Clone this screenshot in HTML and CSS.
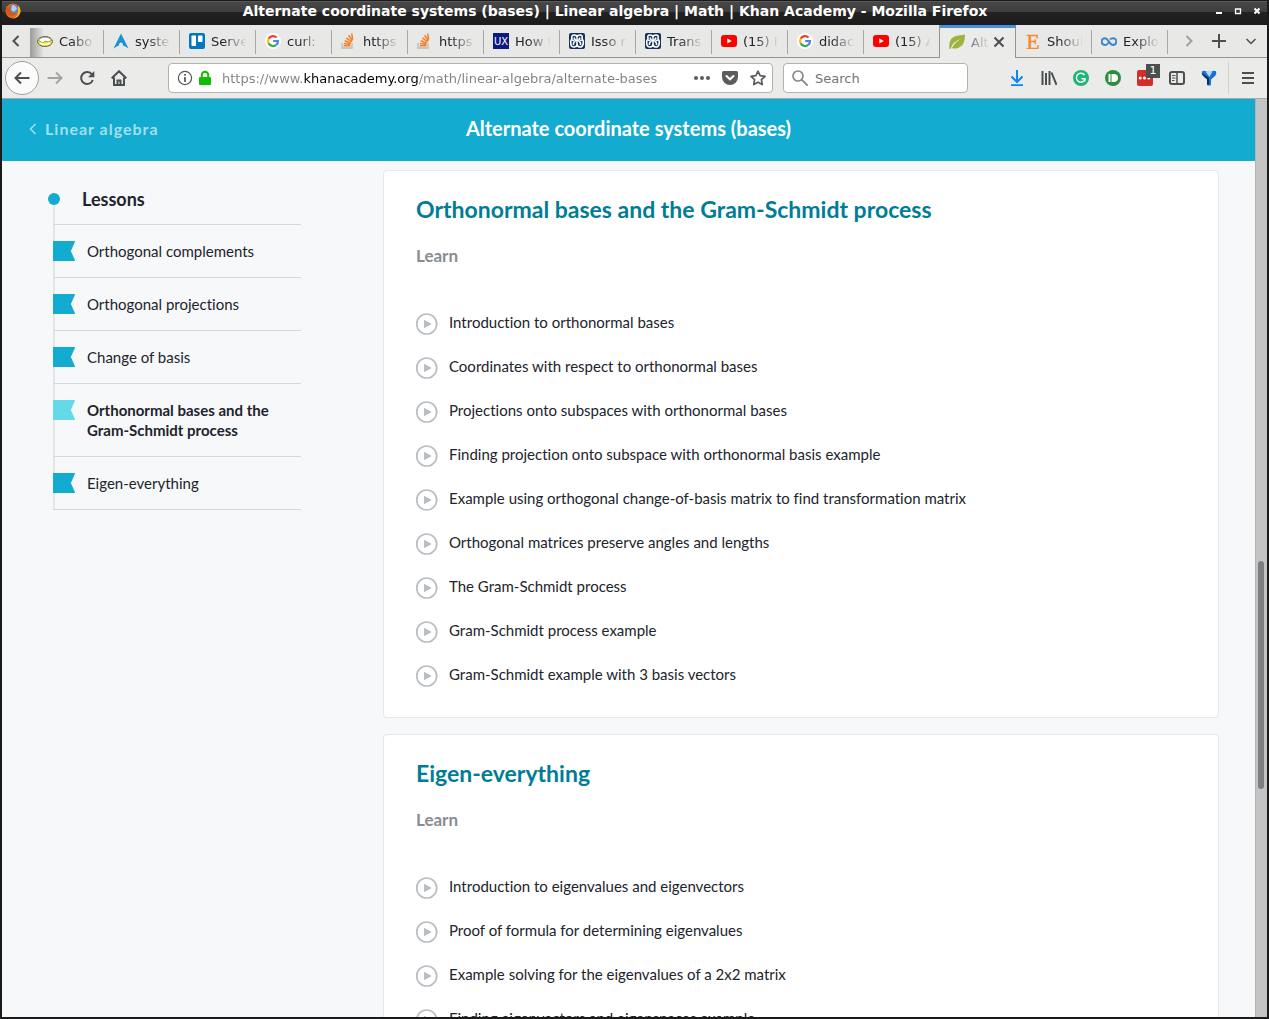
FILE: index.html
```html
<!DOCTYPE html>
<html lang="en">
<head>
<meta charset="utf-8">
<title>Alternate coordinate systems (bases) | Linear algebra | Math | Khan Academy</title>
<link rel="stylesheet" href="styles.css">
</head>
<body>
<svg class="defs" aria-hidden="true">
  <symbol id="google" viewBox="0 0 16 16"><circle cx="8" cy="8" r="8" fill="#fff"/><g fill="none" stroke-width="2.2"><path d="M11.6 4.6A5 5 0 0 0 3.6 5.7" stroke="#ea4335"/><path d="M3.6 5.7a5 5 0 0 0 0 4.6" stroke="#fbbc05"/><path d="M3.6 10.3a5 5 0 0 0 7.6 1.6" stroke="#34a853"/><path d="M11.2 11.9A5 5 0 0 0 13 8H8.2" stroke="#4285f4"/></g></symbol>
  <symbol id="stack" viewBox="0 0 16 16"><path d="M1 10v5h10v-5" fill="none" stroke="#bcbbbb" stroke-width="1.300"/><g stroke="#f48024" stroke-width="1.500"><path d="M2.800 12.800h6.600M2.900 10.500l6.500 1M3.700 7.700l6 2.500M5.300 4.800l5.300 4M7.600 2.300l3.800 5.400M10.700.500l1 6.200"/></g></symbol>
  <symbol id="tube" viewBox="0 0 16 16"><rect y="2" width="16" height="12" rx="3" fill="#f00"/><path d="M6.3 5.4v5.2L10.8 8z" fill="#fff"/></symbol>
  <symbol id="knot" viewBox="0 0 16 16"><rect width="16" height="16" rx="2" fill="#14315c"/><g fill="none" stroke="#fff" stroke-width="1.600"><path d="M3 5.500Q2 2 5 2t3 2.500Q8 2 11 2t2 3.500Q15 8 14.200 11q-.7 3-3.200 3t-3-2.500Q8 14 5 14t-3.200-3Q1 8 3 5.500z"/><path d="M5 4.500l1.500 3L4.500 10v2M11 4.500l-1.500 3 2 2.500v2M8 4.500v7.500M3 7l2 .500M13 7l-2 .500"/></g></symbol>
  <symbol id="play" viewBox="0 0 22 22"><circle cx="10.700" cy="11" r="10" fill="none" stroke="#babec2" stroke-width="1.700"/><path d="M8 7.200v7.600q0 .5.5.3l6.500-3.600q.6-.5 0-1L8.500 6.900q-.5-.2-.5.3z" fill="#babec2"/></symbol>
  <symbol id="flag" viewBox="0 0 22 20"><path d="M0 0h21.300q.9 0 .6.900L18.200 9.200q-.4.800 0 1.600L21.900 19q.3 1-.6 1H0z" fill="currentColor"/></symbol>
</svg>

<div class="titlebar">
  <svg class="i16" viewBox="0 0 16 16"><circle cx="8" cy="8" r="7.600" fill="#e66a12"/><circle cx="8.500" cy="6.500" r="5" fill="#5a86bd"/><path d="M7 2q4 0 5 4l-3 3-3-2z" fill="#b5cce4"/><path d="M1 3q1 1 2 1l3 .5-1 3q1 3 5 2.500 1 1-1 2.500-5 1-8-3z" fill="#d9531a"/><path d="M13 2.500q3 3 2.300 7Q13 15 8 15.500q5-2 5-7z" fill="#fbb72c"/></svg>
  <h1 class="window-title">Alternate coordinate systems (bases) | Linear algebra | Math | Khan Academy - Mozilla Firefox</h1>
  <div class="window-controls">
    <button aria-label="Minimize"><svg viewBox="0 0 8 8"><path d="M1 6h6" stroke="#fff" stroke-width="2"/></svg></button>
    <button aria-label="Maximize"><svg viewBox="0 0 8 8"><path d="M1.500 2v4.500h5V2z" fill="none" stroke="#fff" stroke-width="1.300"/></svg></button>
    <button aria-label="Close"><svg viewBox="0 0 8 8"><path d="M1.500 1.500l5 5m0-5l-5 5" stroke="#fff" stroke-width="2"/></svg></button>
  </div>
</div>

<div class="tabbar">
  <button class="scroll-left" aria-label="Scroll tabs left"><svg class="i16" viewBox="0 0 16 16"><path d="M10.500 3L5.500 8l5 5" class="ln"/></svg></button>
  <div class="tabs" role="tablist">
    <button class="tab first" role="tab"><svg class="i16" viewBox="0 0 16 16"><ellipse cx="8" cy="8.500" rx="7.500" ry="5" fill="#f6e21c" stroke="#6a6430"/><path d="M1 7q7-6 14 0l-4 2-3-1-2 2z" fill="#fff" stroke="#777" stroke-width=".7"/><path d="M3 10q5 3 10 0" fill="none" stroke="#fff" stroke-width="1.500"/></svg><span>Cabo</span></button>
    <button class="tab" role="tab"><svg class="i16" viewBox="0 0 16 16"><path d="M8 .5L.5 15.500Q4 13 6 12.500 6 9.500 8 9.500t2 3q2 .5 5.500 3z" fill="#1793d1"/></svg><span>syste</span></button>
    <button class="tab" role="tab"><svg class="i16" viewBox="0 0 16 16"><rect width="16" height="16" rx="2" fill="#0079bf"/><rect x="2.500" y="2.500" width="4.500" height="10.500" rx=".7" fill="#fff"/><rect x="9" y="2.500" width="4.500" height="6.500" rx=".7" fill="#fff"/></svg><span>Serve</span></button>
    <button class="tab" role="tab"><svg class="i16"><use href="#google"/></svg><span>curl:</span></button>
    <button class="tab" role="tab"><svg class="i16"><use href="#stack"/></svg><span>https</span></button>
    <button class="tab" role="tab"><svg class="i16"><use href="#stack"/></svg><span>https</span></button>
    <button class="tab" role="tab"><svg class="i16" viewBox="0 0 16 16"><rect width="16" height="16" fill="#0a1a80"/><text x="8" y="11.500" class="ux">UX</text></svg><span>How t</span></button>
    <button class="tab" role="tab"><svg class="i16"><use href="#knot"/></svg><span>Isso r</span></button>
    <button class="tab" role="tab"><svg class="i16"><use href="#knot"/></svg><span>Trans</span></button>
    <button class="tab" role="tab"><svg class="i16"><use href="#tube"/></svg><span>(15) I</span></button>
    <button class="tab" role="tab"><svg class="i16"><use href="#google"/></svg><span>didac</span></button>
    <button class="tab before-selected" role="tab"><svg class="i16"><use href="#tube"/></svg><span>(15) A</span></button>
    <div class="tab selected" role="tab" aria-selected="true"><svg class="i16" viewBox="0 0 16 16"><path d="M.5 15Q-1 4 7 2q4-1 9-1.500Q16 12 9 14q-4 1-6 0 3-6 9-9Q4 7 1.500 15z" fill="#9cb43c"/></svg><span>Alt</span><button class="close" aria-label="Close tab"><svg viewBox="0 0 16 16"><path d="M3.500 3.500l9 9m0-9l-9 9" class="ln"/></svg></button></div>
    <button class="tab" role="tab"><svg class="i16" viewBox="0 0 16 16"><text x="8" y="16" class="etsy">E</text></svg><span>Shoul</span></button>
    <button class="tab" role="tab"><svg class="i16" viewBox="0 0 16 16"><path d="M6.500 11Q5 12 4 12a3.300 3.300 0 1 1 0-6.800C7.500 5.200 8.500 12 12 12a3.300 3.300 0 1 0 0-6.800Q10 5.200 9 6.500M6.500 11L8 9" fill="none" stroke="#4086c8" stroke-width="2"/></svg><span>Explo</span></button>
  </div>
  <div class="tab-tools">
    <button aria-label="Scroll tabs right" class="dim"><svg class="i16" viewBox="0 0 16 16"><path d="M5.500 3l5 5-5 5" class="ln"/></svg></button>
    <button aria-label="New tab"><svg class="i16" viewBox="0 0 16 16"><path d="M7 1v14M0 8h14" class="ln"/></svg></button>
    <button aria-label="List all tabs"><svg class="i16" viewBox="0 0 16 16"><path d="M3.500 6L8 10.500 12.500 6" class="ln thin"/></svg></button>
  </div>
</div>

<div class="navbar">
  <button class="back" aria-label="Back"><svg class="i16" viewBox="0 0 16 16"><path d="M15.500 8H1.500M7 2.500L1.500 8 7 13.500" class="ln"/></svg></button>
  <button class="tool dim" aria-label="Forward"><svg class="i16" viewBox="0 0 16 16"><path d="M.5 8h14M9 2.500L14.500 8 9 13.500" class="ln"/></svg></button>
  <button class="tool" aria-label="Reload"><svg class="i16" viewBox="0 0 16 16"><path d="M13 4.500A6 6 0 1 0 13.800 10" class="ln"/><path d="M15.300 1v6.200H9z" fill="#4a4f50"/></svg></button>
  <button class="tool" aria-label="Home"><svg class="i16" viewBox="0 0 16 16"><path d="M.7 8.300L8 1.200l7.300 7.100M3 7.500V15h10V7.500M6.500 15v-4.500h3V15" class="ln"/></svg></button>
  <div class="urlbar">
    <svg class="i16" viewBox="0 0 16 16"><circle cx="8" cy="8" r="6.600" fill="none" stroke="#555" stroke-width="1.200"/><path d="M8 7v5M8 4v1.800" stroke="#555" stroke-width="1.700"/></svg>
    <svg class="i16" viewBox="0 0 16 16"><rect x="2" y="7" width="12" height="8" rx="1" fill="#12bc00"/><path d="M4.800 8V5a3.200 3.200 0 0 1 6.400 0v3" fill="none" stroke="#12bc00" stroke-width="2"/></svg>
    <input class="url" type="text" aria-label="Address" value="https://www.khanacademy.org/math/linear-algebra/alternate-bases">
    <button aria-label="Page actions"><svg class="i16" viewBox="0 0 16 16"><g fill="#5c5c5c"><circle cx="2" cy="8" r="2"/><circle cx="8" cy="8" r="2"/><circle cx="14" cy="8" r="2"/></g></svg></button>
    <button aria-label="Save to Pocket"><svg class="i16" viewBox="0 0 16 16"><path d="M1.500 1h13Q16 1 16 2.500V7A8 8 0 0 1 0 7V2.500Q0 1 1.500 1z" fill="#5c5c5c"/><path d="M4.500 6L8 9.300 11.500 6" fill="none" stroke="#fff" stroke-width="2" stroke-linecap="round"/></svg></button>
    <button aria-label="Bookmark"><svg class="i16" viewBox="0 0 16 16"><path d="M8 1.200l2.100 4.500 4.900.6-3.600 3.400.9 4.900L8 12.200l-4.300 2.400.9-4.900L1 6.300l4.900-.6z" fill="none" stroke="#5c5c5c" stroke-width="1.700" stroke-linejoin="round"/></svg></button>
  </div>
  <div class="searchbar">
    <svg class="i16" viewBox="0 0 16 16"><circle cx="6" cy="6" r="5" fill="none" stroke="#888" stroke-width="1.700"/><path d="M9.700 9.700l6 6" stroke="#888" stroke-width="1.900"/></svg>
    <input type="search" aria-label="Search" placeholder="Search">
  </div>
  <div class="toolbox">
    <button class="tool" aria-label="Downloads"><svg class="i16" viewBox="0 0 16 16"><path d="M8 0v12M2.500 6.500L8 12l5.500-5.500M2 15.200h12" fill="none" stroke="#0a84ff" stroke-width="2"/></svg></button>
    <button class="tool" aria-label="Library"><svg class="i16" viewBox="0 0 16 16"><path d="M1.500 1v14M5 3v12M8.500 1v14M10.500 2.500L15.500 15" class="ln"/></svg></button>
    <button class="tool" aria-label="Grammar checker"><svg class="i16" viewBox="0 0 16 16"><circle cx="8" cy="8" r="8" fill="#1fb574"/><path d="M11.500 5A4.500 4.500 0 1 0 12 9.500V8.700H8.500M11.800 8.700V11.500" fill="none" stroke="#fff" stroke-width="1.400"/></svg></button>
    <button class="tool" aria-label="Pushbullet"><svg class="i16" viewBox="0 0 16 16"><circle cx="8" cy="8" r="8" fill="#2c8d3f"/><path d="M4.500 4v8" stroke="#fff" stroke-width="2"/><path d="M6.500 4H9q4 .3 4 4t-4 4H6.500z" fill="#fff"/></svg></button>
    <button class="tool badged" aria-label="Passwords"><svg class="i16" viewBox="0 0 16 16"><rect width="16" height="16" rx="2" fill="#d32d27"/><g fill="#fff"><circle cx="3.200" cy="8" r="1.500"/><circle cx="7.500" cy="8" r="1.500"/><circle cx="11.800" cy="8" r="1.500"/></g></svg><span class="badge">1</span></button>
    <button class="tool" aria-label="Sidebars"><svg class="i16" viewBox="0 0 16 16"><rect x="1" y="2" width="14" height="12" rx="2" class="ln"/><path d="M8 2v12" class="ln thin"/><path d="M3 5.500h3.500M3 8h3.500M3 10.500h2.500" stroke="#4a4f50"/></svg></button>
    <button class="tool" aria-label="Vimium"><svg class="i16" viewBox="0 0 16 16"><path d="M1 1.500q1-1 3-.5h8q2-.5 3 .5 1 2-1 4.500l-4 3.500V15q-2 1-4 0V9.500L2 6Q0 3.500 1 1.500z" fill="#1273d0"/><path d="M4.500 1.500Q8 0 11.500 1.500L8.500 7z" fill="#a8dcfa"/><path d="M1 3q0 2 5 6v5q1 1 2 0V8z" fill="#13294b"/></svg></button>
  </div>
  <button class="tool menu" aria-label="Open menu"><svg class="i16" viewBox="0 0 16 16"><path d="M2 3h12M2 8h12M2 13h12" class="ln"/></svg></button>
</div>

<div class="viewport">
  <div class="page">
    <header class="topic-header">
      <a class="parent-link" href="#"><svg viewBox="0 0 8 12"><path d="M6.500 1L1.500 6l5 5" fill="none" stroke="currentColor" stroke-width="1.500"/></svg>Linear algebra</a>
      <h2>Alternate coordinate systems (bases)</h2>
    </header>
    <div class="columns">
      <nav class="lessons" aria-label="Lessons">
        <h3><i class="dot"></i>Lessons</h3>
        <ul>
          <li><svg><use href="#flag"/></svg><a href="#">Orthogonal complements</a></li>
          <li><svg><use href="#flag"/></svg><a href="#">Orthogonal projections</a></li>
          <li><svg><use href="#flag"/></svg><a href="#">Change of basis</a></li>
          <li class="current"><svg><use href="#flag"/></svg><a href="#">Orthonormal bases and the Gram-Schmidt process</a></li>
          <li><svg><use href="#flag"/></svg><a href="#">Eigen-everything</a></li>
        </ul>
      </nav>
      <main>
        <section class="card">
          <h3><a href="#">Orthonormal bases and the Gram-Schmidt process</a></h3>
          <h4>Learn</h4>
          <ul>
            <li><a href="#"><svg><use href="#play"/></svg>Introduction to orthonormal bases</a></li>
            <li><a href="#"><svg><use href="#play"/></svg>Coordinates with respect to orthonormal bases</a></li>
            <li><a href="#"><svg><use href="#play"/></svg>Projections onto subspaces with orthonormal bases</a></li>
            <li><a href="#"><svg><use href="#play"/></svg>Finding projection onto subspace with orthonormal basis example</a></li>
            <li><a href="#"><svg><use href="#play"/></svg>Example using orthogonal change-of-basis matrix to find transformation matrix</a></li>
            <li><a href="#"><svg><use href="#play"/></svg>Orthogonal matrices preserve angles and lengths</a></li>
            <li><a href="#"><svg><use href="#play"/></svg>The Gram-Schmidt process</a></li>
            <li><a href="#"><svg><use href="#play"/></svg>Gram-Schmidt process example</a></li>
            <li><a href="#"><svg><use href="#play"/></svg>Gram-Schmidt example with 3 basis vectors</a></li>
          </ul>
        </section>
        <section class="card">
          <h3><a href="#">Eigen-everything</a></h3>
          <h4>Learn</h4>
          <ul>
            <li><a href="#"><svg><use href="#play"/></svg>Introduction to eigenvalues and eigenvectors</a></li>
            <li><a href="#"><svg><use href="#play"/></svg>Proof of formula for determining eigenvalues</a></li>
            <li><a href="#"><svg><use href="#play"/></svg>Example solving for the eigenvalues of a 2x2 matrix</a></li>
            <li><a href="#"><svg><use href="#play"/></svg>Finding eigenvectors and eigenspaces example</a></li>
          </ul>
        </section>
      </main>
    </div>
  </div>
  <div class="scrollbar" aria-hidden="true"><div class="thumb"></div></div>
</div>
</body>
</html>
```
FILE: styles.css
```css
* { box-sizing: border-box; }

body {
  display: flex;
  flex-direction: column;
  height: 100vh;
  margin: 0;
  border: solid #1a1a1b;
  border-width: 0 2px 2px;
  overflow: hidden;
  font-family: "DejaVu Sans", sans-serif;
  font-size: 13px;
  color: #21242c;
}

h1, h2, h3, h4, ul { margin: 0; padding: 0; font-weight: bold; }
ul { list-style: none; font-weight: normal; }
a { color: inherit; text-decoration: none; }

button {
  display: flex;
  align-items: center;
  justify-content: center;
  padding: 0;
  border: 0;
  background: none;
  color: inherit;
  font: inherit;
}

input {
  min-width: 0;
  padding: 0;
  border: 0;
  outline: 0;
  background: none;
  font: inherit;
}

svg { flex: none; display: block; }
.defs { display: none; }
.i16 { width: 16px; height: 16px; }
.ln { fill: none; stroke: #4a4f50; stroke-width: 2; }
.ln.thin { stroke-width: 1.5; }
.dim { opacity: .45; }

/* Window title */
.titlebar {
  flex: none;
  display: grid;
  grid-template-columns: 16px 1fr 52px;
  align-items: center;
  height: 25px;
  padding: 0 6px 3px 3px;
  background: linear-gradient(#1a1a1b 1px, #6a6a6a 1px, #484848 2px, #3d3d3d 12px, #222 12px, #1c1c1c);
}
.window-title {
  color: #fff;
  font-size: 14px;
  line-height: 20px;
  text-align: center;
  white-space: nowrap;
}
.window-controls { display: flex; justify-content: flex-end; gap: 11px; }
.window-controls svg { width: 8px; height: 8px; }

/* Tabs */
.tabbar {
  flex: none;
  display: flex;
  height: 33px;
  background: #e8e8e7;
}
.scroll-left {
  width: 28px;
  border-bottom: 1px solid #949494;
}
.tabs { flex: 1; display: flex; min-width: 0; }
.tab {
  flex: 1 1 76px;
  min-width: 0;
  justify-content: flex-start;
  display: flex;
  align-items: center;
  gap: 6px;
  padding: 0 5px 0 9px;
  border-bottom: 1px solid #949494;
  background: linear-gradient(#a8a8a8, #a8a8a8) right 5px / 1px 24px no-repeat;
}
.tab.first {
  padding-left: 7px;
  flex-basis: 74px;
  background:
    linear-gradient(#a8a8a8, #a8a8a8) right 5px / 1px 24px no-repeat,
    linear-gradient(90deg, #9a9a9a, #e8e8e700) 0 3px / 14px 100% no-repeat;
}
.tab span {
  flex: 1;
  min-width: 0;
  overflow: hidden;
  white-space: nowrap;
  text-align: left;
  -webkit-mask-image: linear-gradient(90deg, #000 12px, transparent 36px);
  mask-image: linear-gradient(90deg, #000 12px, transparent 36px);
}
.tab.before-selected { background: linear-gradient(#949494, #949494) right 0 / 1px 100% no-repeat; }
.tab.selected {
  border-top: 3px solid #4a90d9;
  border-bottom: 0;
  padding-bottom: 2px;
  padding-right: 9px;
  background: linear-gradient(#949494, #949494) right 0 / 1px 100% no-repeat #ebebea;
}
.tab.selected span { -webkit-mask-image: linear-gradient(90deg, #0009, transparent); mask-image: linear-gradient(90deg, #0009, transparent); }
.close { margin-left: -6px; }
.close svg { width: 16px; height: 16px; }
.ux { font: 10px "DejaVu Sans", sans-serif; fill: #fff; text-anchor: middle; }
.etsy { font: 22px "Liberation Serif", serif; fill: #f58b2b; stroke: #f58b2b; stroke-width: .5px; text-anchor: middle; }
.tab-tools {
  display: flex;
  gap: 1px;
  padding: 0 1px 0 6px;
  border-bottom: 1px solid #949494;
}
.tab-tools button { width: 30px; }

/* Navigation toolbar */
.navbar {
  flex: none;
  display: flex;
  align-items: center;
  height: 41px;
  padding: 0 3px;
  border-bottom: 1px solid #a9a9a5;
  background: #ebebea;
}
.back {
  width: 34px;
  height: 34px;
  border: 1px solid #a0a0a0;
  border-radius: 50%;
  background: #fbfbfb;
}
.tool { width: 32px; height: 32px; }
.urlbar, .searchbar {
  display: flex;
  align-items: center;
  height: 30px;
  border: 1px solid #b2b2ae;
  border-radius: 4px;
  background: #fff;
}
.urlbar { flex: 1; gap: 4px; margin: 0 10px 0 33px; padding: 0 2px 0 8px; }
.urlbar button { width: 24px; height: 24px; }
.url {
  flex: 1;
  margin-left: 5px;
  color: transparent;
  background: linear-gradient(90deg, #808080 80px, #000 80px, #000 196px, #808080 196px);
  -webkit-background-clip: text;
  background-clip: text;
}
.searchbar { width: 185px; gap: 7px; padding: 0 8px; }
.searchbar input { flex: 1; }
.searchbar input::placeholder { color: #757575; opacity: 1; }
.toolbox {
  display: flex;
  margin-left: 33px;
  padding-right: 3px;
  height: 32px;
  border-right: 1px solid #cfcfcd;
}
.menu { margin-left: 3px; }
.badged { position: relative; }
.badge {
  position: absolute;
  top: 2px;
  right: 1px;
  width: 14px;
  height: 14px;
  background: #4c4f50;
  color: #fff;
  font-size: 11px;
  line-height: 14px;
}

/* Web page */
.viewport {
  flex: 1;
  display: flex;
  min-height: 0;
}
.page {
  flex: 1;
  min-width: 0;
  overflow: hidden;
  background: #f7f8fa;
  font-family: Lato, sans-serif;
  font-size: 15px;
  line-height: 20px;
  font-variant-ligatures: none;
}
.scrollbar {
  display: flex;
  flex-direction: column;
  align-items: center;
  width: 12px;
  padding-right: 1px;
  border-left: 1px solid #b2b3b2;
  background: #c3c4c3;
}
.scrollbar::before { content: ""; flex: 462; }
.scrollbar::after { content: ""; flex: 228; }
.thumb {
  flex: 228;
  width: 6px;
  border-radius: 3px;
  background: #7b7f7f;
}
.topic-header {
  display: grid;
  grid-template-columns: 1fr auto 1fr;
  align-items: center;
  height: 62px;
  padding: 0 27px 2px;
  background: #14abd0;
  color: #fff;
}
.topic-header h2 { font-size: 20px; line-height: 24px; padding-bottom: 2px; }
.parent-link {
  display: flex;
  align-items: center;
  gap: 8px;
  color: #a1dfed;
  font-size: 16px;
  font-weight: bold;
  letter-spacing: 1px;
}
.parent-link svg { width: 8px; height: 12px; }
.columns {
  display: grid;
  grid-template-columns: 250px 1fr;
  gap: 82px;
  align-items: start;
  padding: 9px 36px 0 49px;
}
.lessons {
  margin-top: 17px;
  padding-left: 2px;
  background: linear-gradient(#e3e5e7, #e3e5e7) 2px 12px / 2px 100% no-repeat;
}
.lessons h3 {
  display: flex;
  align-items: center;
  gap: 22px;
  padding-bottom: 13px;
  font-size: 18px;
  line-height: 24px;
}
.dot {
  width: 12px;
  height: 12px;
  margin-left: -5px;
  border-radius: 50%;
  background: #14abd0;
}
.lessons ul { border-top: 1px solid #d6d8da; }
.lessons li {
  display: flex;
  gap: 12px;
  padding: 16px 0;
  border-bottom: 1px solid #d6d8da;
}
.lessons li svg { width: 22px; height: 20px; color: #14abd0; }
.lessons .current { font-weight: bold; }
.lessons .current svg { color: #63d9ea; }
.card {
  margin-bottom: 16px;
  padding: 24px 32px 21px;
  border: 1px solid #e5e7e9;
  border-radius: 4px;
  background: #fff;
}
.card h3 { color: #007d96; font-size: 23px; line-height: 28px; }
.card h4 {
  margin: 21px 0 32px;
  color: #888d93;
  font-size: 17px;
  line-height: 24px;
}
.card li a {
  display: flex;
  align-items: center;
  gap: 11px;
  height: 44px;
}
.card li svg { width: 22px; height: 22px; margin-top: 4px; }
```
